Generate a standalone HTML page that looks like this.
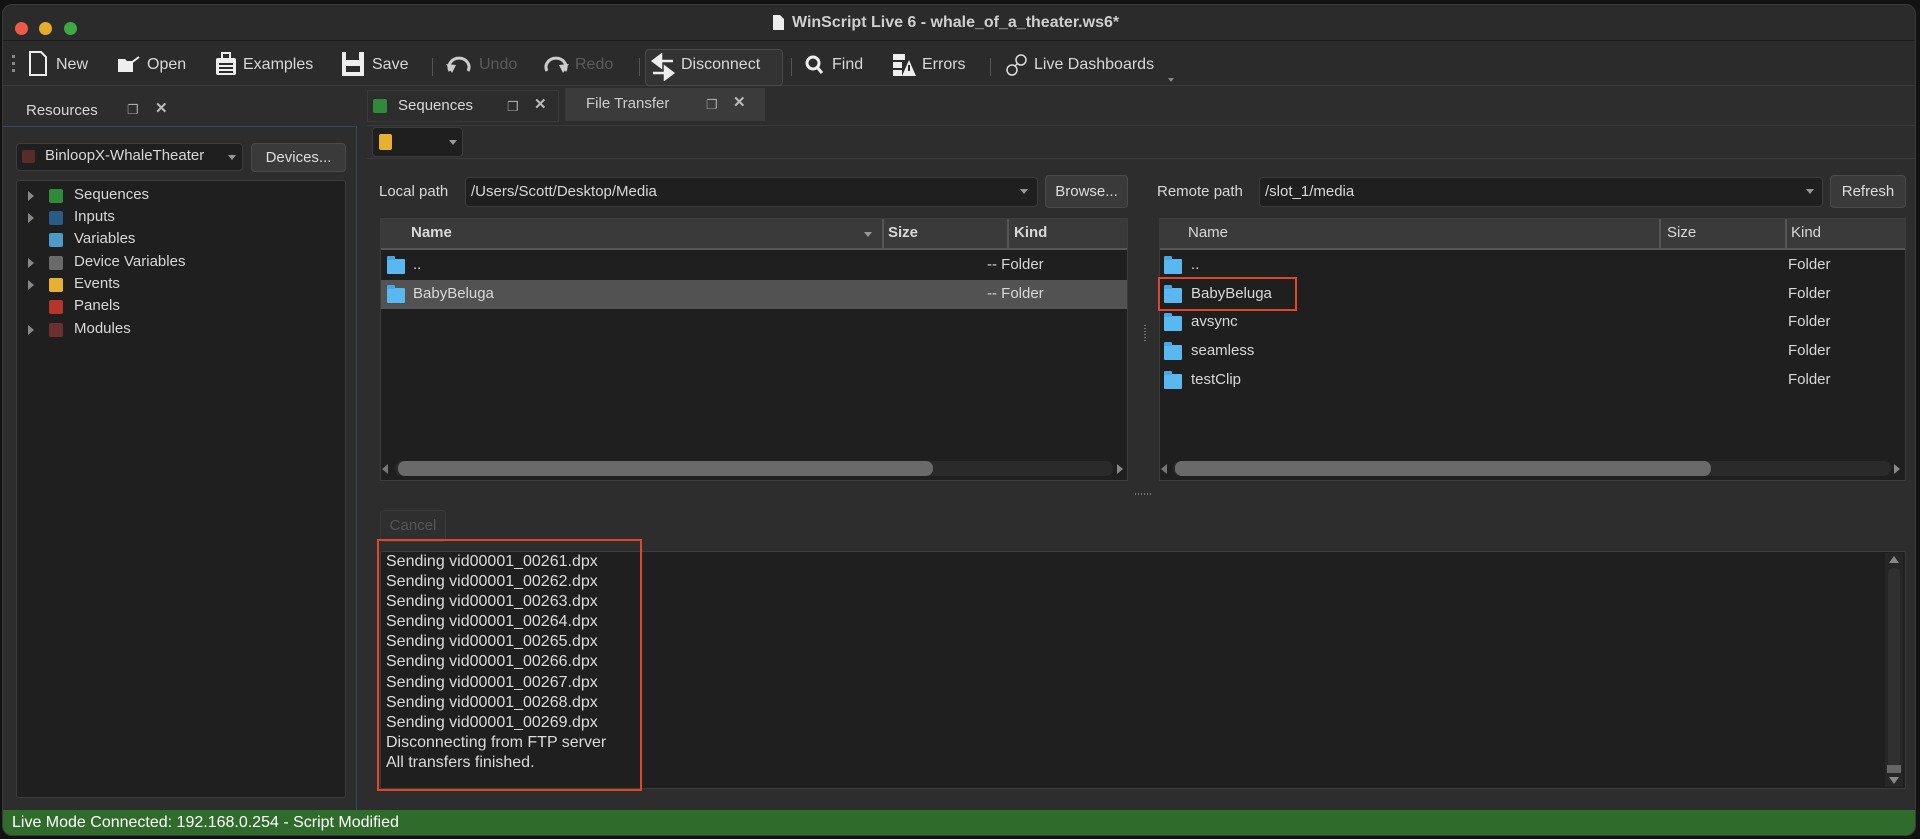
<!DOCTYPE html>
<html><head><meta charset="utf-8"><style>
*{box-sizing:border-box;margin:0;padding:0}
body{width:1920px;height:839px;background:#121212;font-family:"Liberation Sans",sans-serif;color:#d8d8d8;overflow:hidden;position:relative;font-size:15px}
.a{position:absolute}
#win{left:2px;top:4px;width:1914px;height:832px;background:#2d2d2d;border-radius:10px;overflow:hidden;border:1px solid #3a3a3a}
.tl{width:13px;height:13px;border-radius:50%;top:17px}
.t{white-space:nowrap}
.sep{width:1px;height:18px;background:#555;top:53px}
.btn{background:#3a3a3a;border:1px solid #4a4a4a;border-radius:4px;color:#ddd;text-align:center}
.combo{background:#1f1f1f;border:1px solid #3c3c3c;border-radius:4px}
.arr{width:0;height:0;border-left:4px solid transparent;border-right:4px solid transparent;border-top:6px solid #999}
.box{background:#1f1f1f;border:1px solid #3c3c3c}
.hdr{background:#3a3a3a;border-bottom:2px solid #555;height:31px}
.sq{width:14px;height:14px;border-radius:2px}
.tri{width:0;height:0;border-top:5px solid transparent;border-bottom:5px solid transparent;border-left:6px solid #888}
.fold{width:18px;height:15px;background:#5ab8f0;border-radius:1px}
.fold:before{content:"";position:absolute;left:0;top:-3px;width:8px;height:4px;background:#4aa6e0;border-radius:1px 1px 0 0}
.ic{font-size:13px;color:#aaa}
</style></head><body>
<div id="win" class="a">
<!-- title bar -->
<div class="a" style="left:0;top:0;width:100%;height:36px;background:#2b2b2b;border-bottom:1px solid #1a1a1a"></div>
<div class="a tl" style="left:12px;background:#ee5a4a"></div>
<div class="a tl" style="left:36px;background:#e3ac2a"></div>
<div class="a tl" style="left:61px;background:#3ea845"></div>
<svg class="a" style="left:769px;top:9px" width="13" height="17"><path d="M1 1h7l4 4v11H1z" fill="#eee"/></svg>
<div class="a t" style="left:789px;top:9px;font-size:16px;font-weight:bold;color:#cfcfcf">WinScript Live 6 - whale_of_a_theater.ws6*</div>
<!-- toolbar -->
<div class="a" style="left:0;top:36px;width:100%;height:45px;background:#2b2b2b;border-bottom:1px solid #3a3a3a"></div>
<div class="a" style="left:9px;top:50px;width:3px;height:20px;background:repeating-linear-gradient(#888 0 3px,transparent 3px 7px)"></div>
<svg class="a" style="left:25px;top:46px" width="20" height="26"><path d="M2 1h11l5 5v18H2z" fill="none" stroke="#eee" stroke-width="2"/></svg>
<div class="a t" style="left:53px;top:51px;font-size:16px">New</div>
<svg class="a" style="left:114px;top:50px" width="24" height="18"><path d="M1 4h7l2 2h6v11H1z" fill="#eee"/><path d="M14 8l8-6" stroke="#eee" stroke-width="2"/></svg>
<div class="a t" style="left:144px;top:51px;font-size:16px">Open</div>
<svg class="a" style="left:212px;top:47px" width="22" height="24"><rect x="1" y="6" width="20" height="17" rx="2" fill="#eee"/><rect x="7" y="1" width="8" height="6" fill="none" stroke="#eee" stroke-width="2"/><path d="M4 12h14M4 16h14M4 20h14" stroke="#2b2b2b" stroke-width="2"/></svg>
<div class="a t" style="left:240px;top:51px;font-size:16px">Examples</div>
<svg class="a" style="left:338px;top:46px" width="24" height="26"><path d="M1 1h22v24H1z" fill="#eee"/><rect x="5" y="1" width="13" height="8" fill="#2b2b2b"/><rect x="5" y="15" width="14" height="6" fill="#2b2b2b"/></svg>
<div class="a t" style="left:369px;top:51px;font-size:16px">Save</div>
<div class="a sep" style="left:429px"></div>
<svg class="a" style="left:443px;top:51px" width="26" height="18"><path d="M4 15a10 9 0 1 1 18 0" fill="none" stroke="#ccc" stroke-width="3"/><path d="M0 8l6 9 4-8z" fill="#ccc"/></svg>
<div class="a t" style="left:476px;top:51px;font-size:16px;color:#5a5a5a">Undo</div>
<svg class="a" style="left:540px;top:51px" width="26" height="18"><path d="M4 15a10 9 0 1 1 18 0" fill="none" stroke="#ccc" stroke-width="3"/><path d="M26 8l-6 9-4-8z" fill="#ccc"/></svg>
<div class="a t" style="left:572px;top:51px;font-size:16px;color:#5a5a5a">Redo</div>
<div class="a sep" style="left:636px"></div>
<div class="a" style="left:642px;top:44px;width:138px;height:37px;border:1px solid #4a4a4a;border-radius:4px;background:#333"></div>
<svg class="a" style="left:648px;top:48px" width="24" height="28"><path d="M10 2L2 8l8 6zM2 8h20M14 14l8 6-8 6zM22 20H2" fill="#eee" stroke="#eee" stroke-width="2.5"/></svg>
<div class="a t" style="left:678px;top:51px;font-size:16px">Disconnect</div>
<div class="a sep" style="left:788px"></div>
<svg class="a" style="left:802px;top:50px" width="18" height="20"><circle cx="8" cy="8" r="6" fill="none" stroke="#eee" stroke-width="3"/><path d="M12 12l5 6" stroke="#eee" stroke-width="3"/></svg>
<div class="a t" style="left:829px;top:51px;font-size:16px">Find</div>
<svg class="a" style="left:889px;top:48px" width="24" height="24"><rect x="1" y="1" width="12" height="6" fill="#eee"/><rect x="1" y="9" width="9" height="6" fill="#eee"/><rect x="1" y="17" width="9" height="6" fill="#eee"/><path d="M17 7l7 16H10z" fill="#eee"/><path d="M17 12v6" stroke="#2b2b2b" stroke-width="2"/></svg>
<div class="a t" style="left:919px;top:51px;font-size:16px">Errors</div>
<div class="a sep" style="left:987px"></div>
<svg class="a" style="left:1003px;top:48px" width="22" height="24"><circle cx="6" cy="17" r="5" fill="none" stroke="#ddd" stroke-width="1.5"/><circle cx="15" cy="7" r="5" fill="none" stroke="#ddd" stroke-width="1.5"/><path d="M9 13l3-3" stroke="#ddd" stroke-width="1.5"/></svg>
<div class="a t" style="left:1031px;top:51px;font-size:16px">Live Dashboards</div>
<div class="a arr" style="left:1165px;top:73px;border-width:4px 3px 0;border-top-color:#888"></div>
<!-- panel headers -->
<div class="a t" style="left:23px;top:97px;font-size:15px">Resources</div>
<div class="a ic" style="left:124px;top:97px">&#x2750;</div>
<div class="a" style="left:152px;top:94px;font-size:15px;color:#bbb;font-weight:bold">✕</div>
<div class="a" style="left:0;top:121px;width:354px;height:688px;border:1px solid #2c4a66;border-left:none;background:#2d2d2d"></div>
<div class="a combo" style="left:13px;top:138px;width:227px;height:28px"></div>
<div class="a sq" style="left:19px;top:145px;background:#5a2b2b;width:13px;height:13px"></div>
<div class="a t" style="left:42px;top:142px;font-size:15px">BinloopX-WhaleTheater</div>
<div class="a arr" style="left:225px;top:150px;border-width:5px 4px 0"></div>
<div class="a btn" style="left:248px;top:138px;width:95px;height:29px;line-height:27px;font-size:15px">Devices...</div>
<div class="a box" style="left:13px;top:175px;width:330px;height:618px;border-radius:3px"></div>
<div class="a tri" style="left:25px;top:186px"></div><div class="a sq" style="left:46px;top:184px;background:#2f8a3a"></div><div class="a t" style="left:71px;top:181px">Sequences</div>
<div class="a tri" style="left:25px;top:208px"></div><div class="a sq" style="left:46px;top:206px;background:#2a5c86"></div><div class="a t" style="left:71px;top:203px">Inputs</div>
<div class="a sq" style="left:46px;top:228px;background:#4b9cc8"></div><div class="a t" style="left:71px;top:225px">Variables</div>
<div class="a tri" style="left:25px;top:253px"></div><div class="a sq" style="left:46px;top:251px;background:#6a6a6a"></div><div class="a t" style="left:71px;top:248px">Device Variables</div>
<div class="a tri" style="left:25px;top:275px"></div><div class="a sq" style="left:46px;top:273px;background:#e6b030"></div><div class="a t" style="left:71px;top:270px">Events</div>
<div class="a sq" style="left:46px;top:295px;background:#b8352a"></div><div class="a t" style="left:71px;top:292px">Panels</div>
<div class="a tri" style="left:25px;top:320px"></div><div class="a sq" style="left:46px;top:318px;background:#6a2f2f"></div><div class="a t" style="left:71px;top:315px">Modules</div>
<!-- tabs -->
<div class="a" style="left:364px;top:85px;width:192px;height:32px;background:#2d2d2d;border:1px solid #3a3a3a"></div>
<div class="a sq" style="left:370px;top:94px;background:#2f8a3a"></div>
<div class="a t" style="left:395px;top:92px;font-size:15px">Sequences</div>
<div class="a ic" style="left:504px;top:94px">&#x2750;</div>
<div class="a" style="left:531px;top:90px;color:#bbb;font-weight:bold">✕</div>
<div class="a" style="left:562px;top:83px;width:200px;height:33px;background:#3b3b3b"></div>
<div class="a t" style="left:583px;top:90px;font-size:15px;color:#ccc">File Transfer</div>
<div class="a ic" style="left:703px;top:92px">&#x2750;</div>
<div class="a" style="left:730px;top:88px;color:#bbb;font-weight:bold">✕</div>
<div class="a" style="left:364px;top:120px;width:1550px;height:1px;background:#3a3a3a"></div>
<div class="a combo" style="left:369px;top:122px;width:91px;height:30px"></div>
<div class="a sq" style="left:376px;top:129px;background:#e6b030;width:13px;height:16px"></div>
<div class="a arr" style="left:446px;top:135px;border-width:5px 4px 0"></div>
<div class="a" style="left:364px;top:153px;width:1550px;height:1px;background:#3a3a3a"></div>
<!-- paths -->
<div class="a t" style="left:376px;top:178px">Local path</div>
<div class="a combo" style="left:462px;top:172px;width:573px;height:30px"></div>
<div class="a t" style="left:468px;top:178px">/Users/Scott/Desktop/Media</div>
<div class="a arr" style="left:1017px;top:184px;border-width:5px 4px 0"></div>
<div class="a btn" style="left:1042px;top:170px;width:83px;height:33px;line-height:31px">Browse...</div>
<div class="a t" style="left:1154px;top:178px">Remote path</div>
<div class="a combo" style="left:1256px;top:172px;width:564px;height:30px"></div>
<div class="a t" style="left:1262px;top:178px">/slot_1/media</div>
<div class="a arr" style="left:1803px;top:184px;border-width:5px 4px 0"></div>
<div class="a btn" style="left:1827px;top:170px;width:76px;height:33px;line-height:31px">Refresh</div>
<!-- left table -->
<div class="a box" style="left:377px;top:213px;width:748px;height:263px"></div>
<div class="a hdr" style="left:378px;top:214px;width:746px"></div>
<div class="a" style="left:879px;top:214px;width:2px;height:31px;background:#555"></div>
<div class="a" style="left:1004px;top:214px;width:2px;height:31px;background:#555"></div>
<div class="a t" style="left:408px;top:219px;font-weight:bold">Name</div>
<div class="a arr" style="left:861px;top:227px;border-width:5px 4px 0"></div>
<div class="a t" style="left:885px;top:219px;font-weight:bold">Size</div>
<div class="a t" style="left:1011px;top:219px;font-weight:bold">Kind</div>
<div class="a fold" style="left:384px;top:254px"></div><div class="a t" style="left:410px;top:251px">..</div><div class="a t" style="left:984px;top:251px">--&nbsp;Folder</div>
<div class="a" style="left:378px;top:275px;width:746px;height:29px;background:#525252"></div>
<div class="a fold" style="left:384px;top:283px"></div><div class="a t" style="left:410px;top:280px">BabyBeluga</div><div class="a t" style="left:984px;top:280px">--&nbsp;Folder</div>
<div class="a" style="left:392px;top:456px;width:718px;height:15px;border-radius:7px;background:#2a2a2a"></div>
<div class="a" style="left:395px;top:456px;width:535px;height:15px;border-radius:7px;background:#6a6a6a"></div>
<div class="a" style="left:379px;top:459px;border-top:5px solid transparent;border-bottom:5px solid transparent;border-right:6px solid #777"></div>
<div class="a" style="left:1114px;top:459px;border-top:5px solid transparent;border-bottom:5px solid transparent;border-left:6px solid #888"></div>
<div class="a" style="left:1141px;top:320px;width:2px;height:18px;background:repeating-linear-gradient(#777 0 1px,transparent 1px 3px)"></div>
<!-- right table -->
<div class="a box" style="left:1156px;top:213px;width:747px;height:263px"></div>
<div class="a hdr" style="left:1157px;top:214px;width:745px"></div>
<div class="a" style="left:1656px;top:214px;width:2px;height:31px;background:#555"></div>
<div class="a" style="left:1782px;top:214px;width:2px;height:31px;background:#555"></div>
<div class="a t" style="left:1185px;top:219px">Name</div>
<div class="a t" style="left:1664px;top:219px">Size</div>
<div class="a t" style="left:1788px;top:219px">Kind</div>
<div class="a fold" style="left:1161px;top:254px"></div><div class="a t" style="left:1188px;top:251px">..</div><div class="a t" style="left:1785px;top:251px">Folder</div>
<div class="a fold" style="left:1161px;top:283px"></div><div class="a t" style="left:1188px;top:280px">BabyBeluga</div><div class="a t" style="left:1785px;top:280px">Folder</div>
<div class="a fold" style="left:1161px;top:311px"></div><div class="a t" style="left:1188px;top:308px">avsync</div><div class="a t" style="left:1785px;top:308px">Folder</div>
<div class="a fold" style="left:1161px;top:340px"></div><div class="a t" style="left:1188px;top:337px">seamless</div><div class="a t" style="left:1785px;top:337px">Folder</div>
<div class="a fold" style="left:1161px;top:369px"></div><div class="a t" style="left:1188px;top:366px">testClip</div><div class="a t" style="left:1785px;top:366px">Folder</div>
<div class="a" style="left:1155px;top:272px;width:139px;height:34px;border:2px solid #e0472a"></div>
<div class="a" style="left:1170px;top:456px;width:718px;height:15px;border-radius:7px;background:#2a2a2a"></div>
<div class="a" style="left:1172px;top:456px;width:536px;height:15px;border-radius:7px;background:#6a6a6a"></div>
<div class="a" style="left:1158px;top:459px;border-top:5px solid transparent;border-bottom:5px solid transparent;border-right:6px solid #777"></div>
<div class="a" style="left:1891px;top:459px;border-top:5px solid transparent;border-bottom:5px solid transparent;border-left:6px solid #888"></div>
<div class="a" style="left:1132px;top:488px;width:18px;height:2px;background:repeating-linear-gradient(90deg,#777 0 1px,transparent 1px 3px)"></div>
<!-- cancel & log -->
<div class="a" style="left:377px;top:505px;width:66px;height:32px;border:1px solid #3a3a3a;border-radius:4px;color:#555;text-align:center;line-height:30px;background:#2f2f2f">Cancel</div>
<div class="a box" style="left:377px;top:546px;width:1526px;height:238px;border-radius:2px"></div>
<div class="a" style="left:1882px;top:548px;width:18px;height:234px;background:#262626"></div>
<div class="a" style="left:1885px;top:563px;width:12px;height:200px;border-radius:5px;background:#303030"></div>
<div class="a" style="left:1884px;top:760px;width:14px;height:8px;background:#666"></div>
<div class="a" style="left:1886px;top:551px;border-left:5px solid transparent;border-right:5px solid transparent;border-bottom:7px solid #888"></div>
<div class="a" style="left:1886px;top:772px;border-left:5px solid transparent;border-right:5px solid transparent;border-top:7px solid #888"></div>
<div class="a" style="left:383px;top:547px;font-size:16px;line-height:20.1px;color:#dcdcdc;white-space:pre">Sending vid00001_00261.dpx
Sending vid00001_00262.dpx
Sending vid00001_00263.dpx
Sending vid00001_00264.dpx
Sending vid00001_00265.dpx
Sending vid00001_00266.dpx
Sending vid00001_00267.dpx
Sending vid00001_00268.dpx
Sending vid00001_00269.dpx
Disconnecting from FTP server
All transfers finished.</div>
<div class="a" style="left:374px;top:534px;width:265px;height:252px;border:2px solid #e0472a"></div>
<!-- status -->
<div class="a" style="left:0;top:805px;width:100%;height:28px;background:#2f6b2a;border-bottom:2px solid #4a9a42"></div>
<div class="a t" style="left:9px;top:809px;font-size:16px;color:#fff">Live Mode Connected: 192.168.0.254 - Script Modified</div>
</div>
</body></html>
